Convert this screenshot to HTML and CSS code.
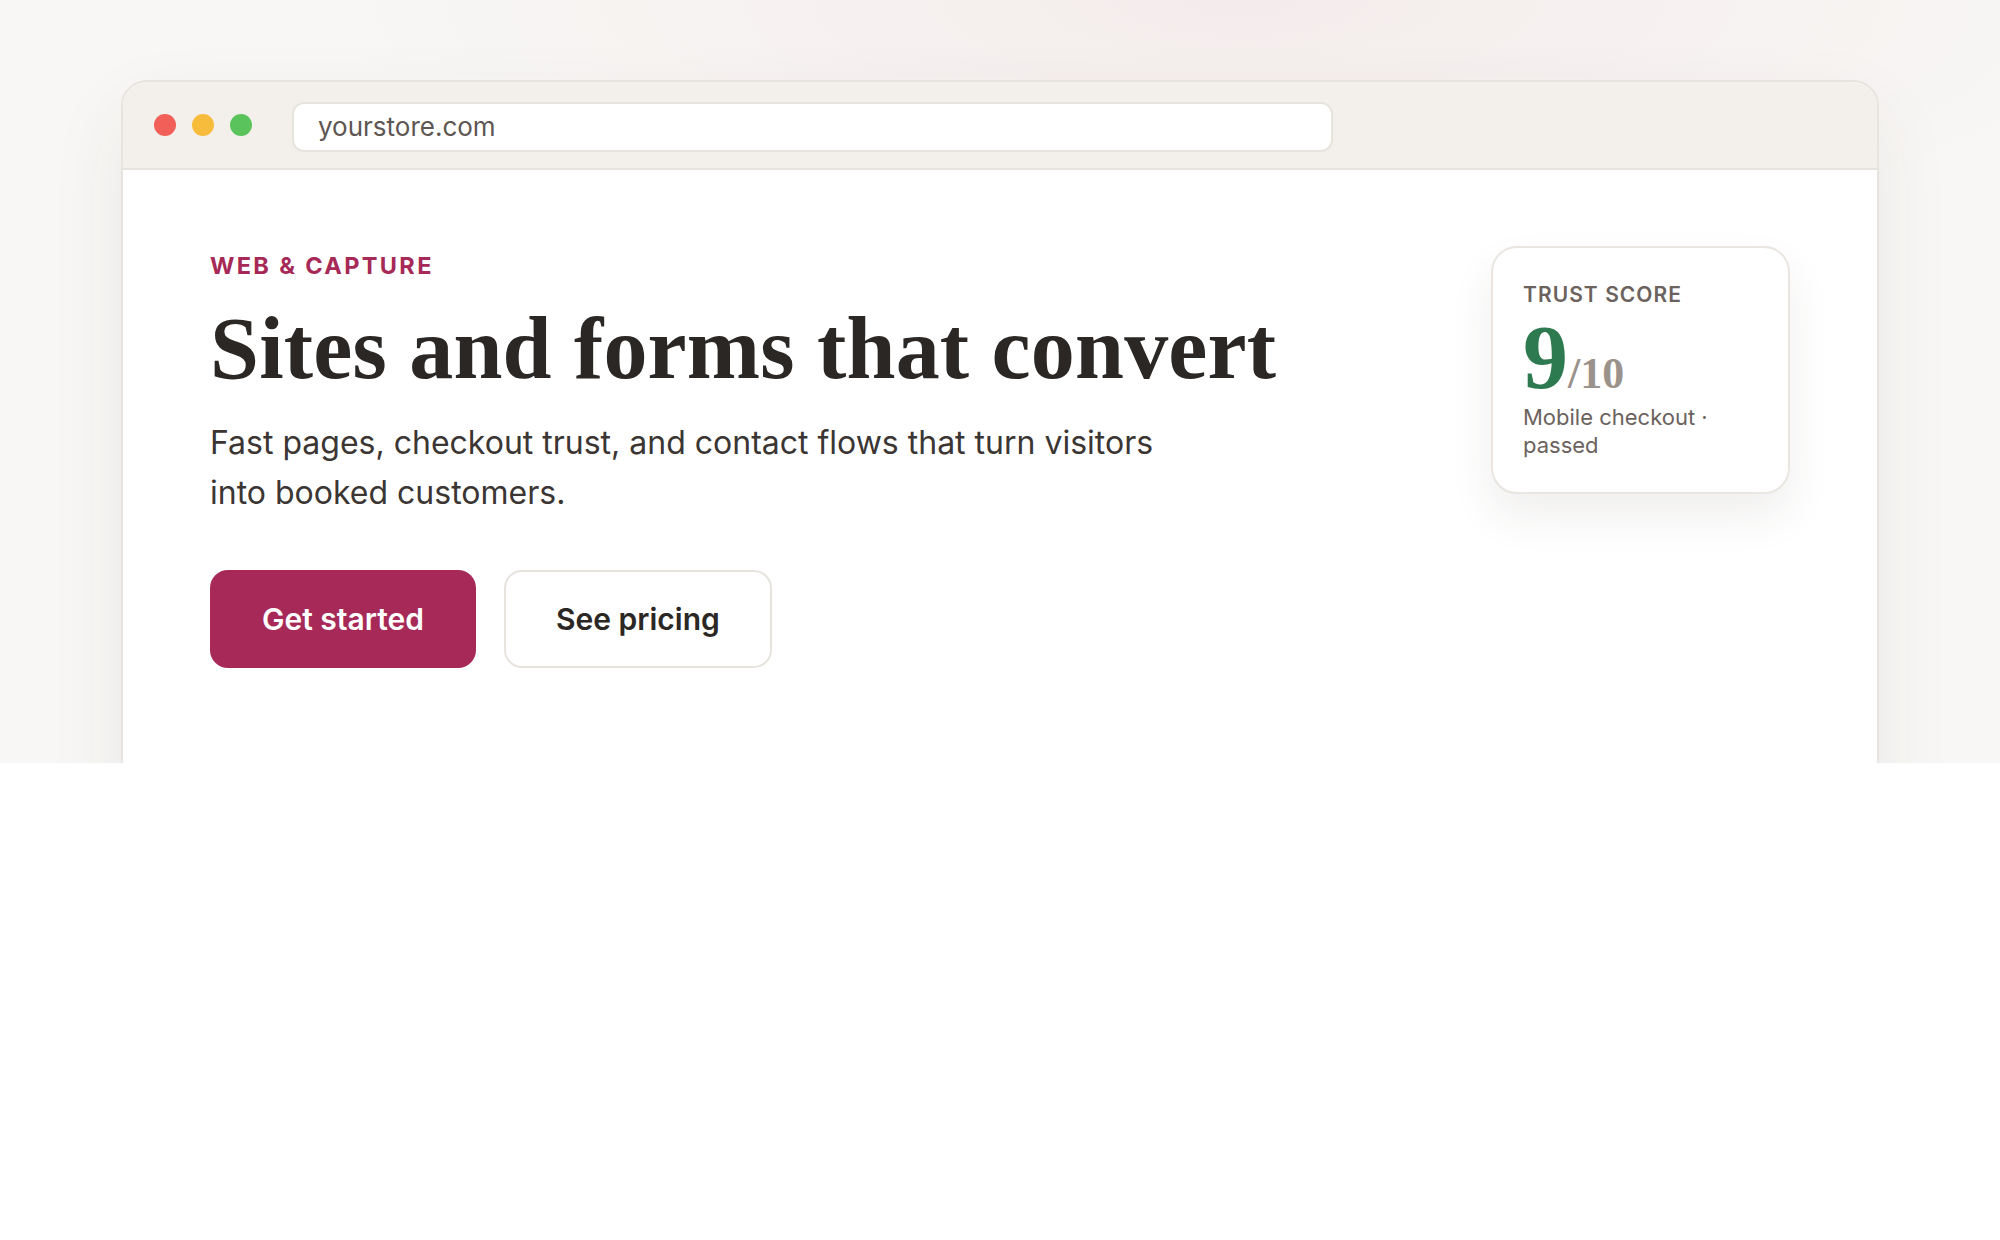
FILE: index.html
```html
<!DOCTYPE html>
<html lang="en">
<head>
    <meta charset="UTF-8">
    <meta name="viewport" content="width=device-width, initial-scale=1.0">
    <title>Web &amp; Capture</title>
    <link rel="stylesheet" href="styles.css">
</head>
<body>
    <section class="hero">
        <div class="browser">
            <div class="toolbar">
                <div class="dots">
                    <span class="dot red"></span>
                    <span class="dot yellow"></span>
                    <span class="dot green"></span>
                </div>
                <div class="url-bar">yourstore.com</div>
            </div>

            <div class="page">
                <div class="intro">
                    <p class="eyebrow">WEB &amp; CAPTURE</p>
                    <h1>Sites and forms that convert</h1>
                    <p class="lead">Fast pages, checkout trust, and contact flows that turn visitors into booked customers.</p>
                    <div class="actions">
                        <a href="#" class="btn btn-primary">Get started</a>
                        <a href="#" class="btn btn-outline">See pricing</a>
                    </div>
                </div>

                <!-- score card -->
                <div class="score-card">
                    <p class="score-label">TRUST SCORE</p>
                    <div class="score"><span class="score-value">9</span><span class="score-max">/10</span></div>
                    <p class="score-note">Mobile checkout · passed</p>
                </div>
            </div>
        </div>
    </section>
</body>
</html>
```

FILE: styles.css
```css
body {
    margin: 0;
    font-family: 'Inter', 'Noto Sans', sans-serif;
    background: #ffffff;
    color: #2a2725;
}
.hero {
    height: 763px;
    overflow: hidden;
    box-sizing: border-box;
    padding: 80px 121px 0;
    background:
        radial-gradient(ellipse 900px 260px at 62% 0%, #f4ecec 0%, rgba(244,236,236,0) 100%),
        #f8f7f5;
}
.browser {
    background: #fff;
    border: 2px solid #e7e3dd;
    border-radius: 26px 26px 0 0;
    box-shadow: 0 30px 80px rgba(70, 50, 40, 0.07);
    overflow: hidden;
}
.toolbar {
    display: flex;
    align-items: center;
    height: 86px;
    padding: 0 31px;
    background: #f3f0ec;
    border-bottom: 2px solid #e7e3dd;
}
.dots {
    display: flex;
    gap: 16px;
    margin-right: 40px;
}
.dot {
    width: 22px;
    height: 22px;
    border-radius: 50%;
}
.dot.red { background: #f25f58; }
.dot.yellow { background: #f8bc3c; }
.dot.green { background: #5bc35b; }
.url-bar {
    width: 989px;
    height: 46px;
    line-height: 46px;
    margin-top: 3px;
    padding: 0 24px;
    background: #fff;
    border: 2px solid #e7e3dd;
    border-radius: 12px;
    font-size: 26px;
    color: #5e5652;
}
.page {
    display: flex;
    justify-content: space-between;
    align-items: flex-start;
    padding: 76px 87px 200px;
}
.intro {
    padding-top: 2px;
}
.eyebrow {
    margin: 0;
    font-size: 23.5px;
    line-height: 36px;
    font-weight: 700;
    letter-spacing: 0.1em;
    color: #a62957;
}
h1 {
    margin: 17px 0 0;
    font-family: 'Liberation Serif', 'Times New Roman', serif;
    font-size: 88px;
    line-height: 1.1;
    font-weight: 700;
    letter-spacing: 0.2px;
    color: #2a2725;
}
.lead {
    margin: 20px 0 0;
    max-width: 960px;
    font-size: 32px;
    line-height: 50px;
    color: #3b3633;
}
.actions {
    display: flex;
    gap: 28px;
    margin-top: 52px;
}
.btn {
    display: inline-block;
    padding: 29px 50px;
    font-size: 30px;
    line-height: 36px;
    font-weight: 600;
    text-decoration: none;
    border-radius: 18px;
    border: 2px solid transparent;
}
.btn-primary {
    background: #a62957;
    color: #fff;
}
.btn-outline {
    background: #fff;
    color: #2a2725;
    border-color: #e7e3dd;
}
.score-card {
    width: 235px;
    padding: 32px 30px 33px;
    background: #fff;
    border: 2px solid #e9e5e0;
    border-radius: 26px;
    box-shadow: 0 22px 44px rgba(60, 45, 35, 0.08);
}
.score-label {
    margin: 0;
    font-size: 21px;
    line-height: 29px;
    font-weight: 600;
    letter-spacing: 0.05em;
    color: #6b625d;
}
.score {
    margin-top: 4px;
    font-family: 'Liberation Serif', 'Times New Roman', serif;
    font-weight: 700;
    font-size: 90px;
    line-height: 90px;
}
.score-value {
    color: #2d7a50;
}
.score-max {
    font-size: 44px;
    line-height: 1;
    color: #9b928c;
}
.score-note {
    margin: 0;
    font-size: 22px;
    line-height: 28px;
    color: #6b625d;
}
```
